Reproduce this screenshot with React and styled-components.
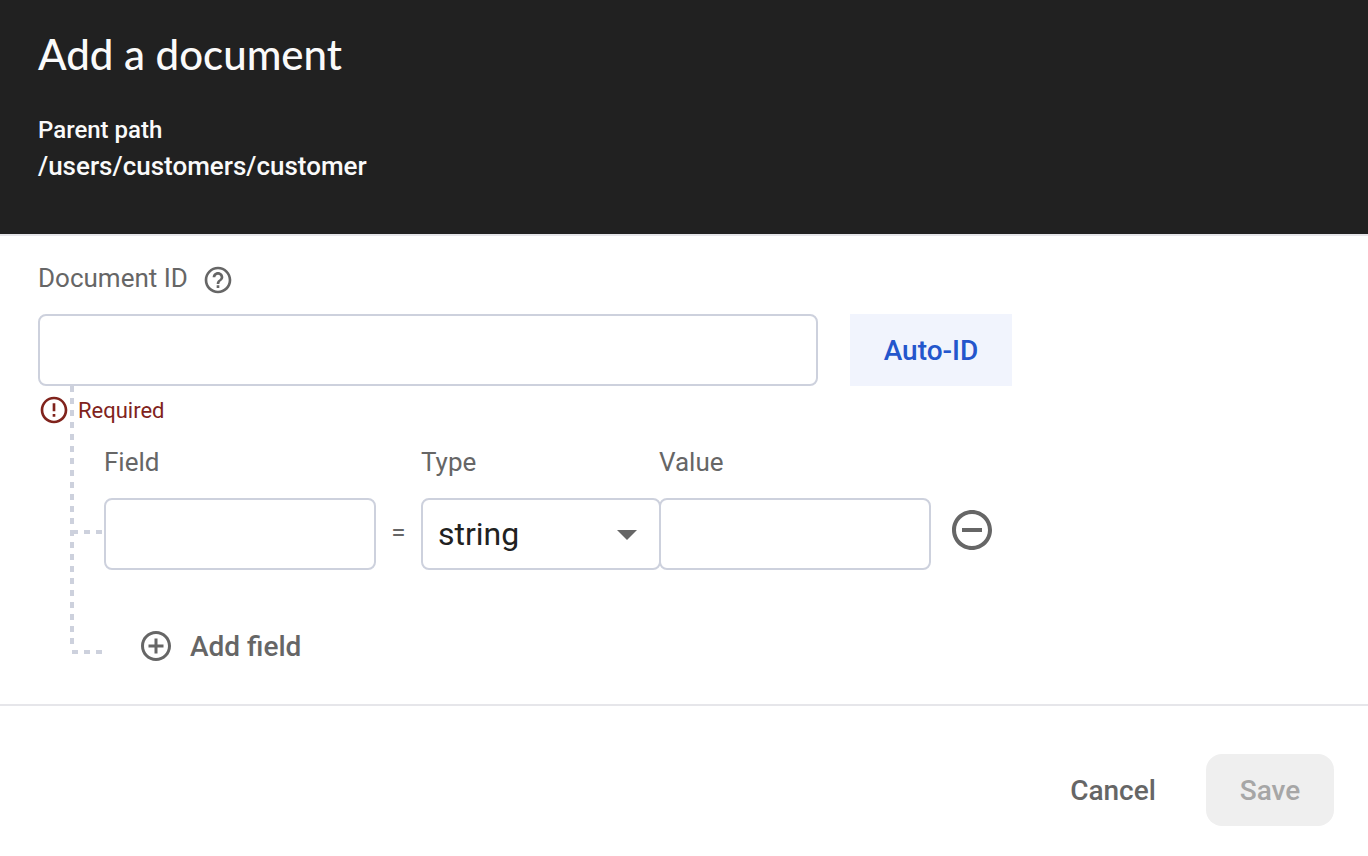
import React, { useState } from "react";
import styled, { createGlobalStyle } from "styled-components";
import {
  MdAddCircleOutline,
  MdErrorOutline,
  MdHelpOutline,
  MdRemoveCircleOutline,
} from "react-icons/md";

const color = {
  header: "#212121",
  text: "#212121",
  muted: "#666666",
  outline: "#cdd1dd",
  rule: "#e6e6ea",
  error: "#80231c",
  primary: "#2456cc",
  primaryTint: "#f1f4fd",
};

const dash = (direction) =>
  `repeating-linear-gradient(${direction}, ${color.outline} 0 6px, transparent 6px 12px)`;

const GlobalStyle = createGlobalStyle`
  *, *::before, *::after { box-sizing: border-box; }
  body {
    margin: 0;
    background: #fff;
    color: ${color.text};
    font-family: Roboto, "Liberation Sans", sans-serif;
  }
  button, input, select { font-family: inherit; }
`;

const Dialog = styled.form`
  display: flex;
  flex-direction: column;
`;

const Header = styled.header`
  background: ${color.header};
  border-bottom: 2px solid ${color.rule};
  color: #fafafa;
  padding: 30px 38px 50px;
`;

const Title = styled.h1`
  margin: 0 0 34px;
  font: 500 42px/48px Lato, sans-serif;
`;

const PathLine = styled.p`
  margin: 0;
  font-size: ${(p) => p.$size};
  font-weight: 500;
  line-height: 36px;
`;

const Body = styled.main`
  padding: 26px 38px 32px;
  border-bottom: 2px solid ${color.rule};
`;

const Label = styled.label`
  display: block;
  color: ${color.muted};
  font-size: 26px;
  line-height: 32px;
`;

const LabelRow = styled.div`
  display: flex;
  align-items: flex-start;
  gap: 14px;
  margin-bottom: 16px;
`;

const IconButton = styled.button`
  display: flex;
  align-items: center;
  justify-content: center;
  height: ${(p) => p.$height};
  padding: 0;
  border: 0;
  background: none;
  color: ${color.muted};
  cursor: pointer;
`;

const IdRow = styled.div`
  display: grid;
  grid-template-columns: minmax(0, 780px) auto;
  justify-content: start;
  gap: 32px;
`;

const TextInput = styled.input`
  display: block;
  width: 100%;
  height: 72px;
  padding: 0 16px;
  border: 2px solid ${color.outline};
  border-radius: 8px;
  background: #fff;
  color: ${color.text};
  font-size: 32px;
`;

const Button = styled.button`
  min-width: ${(p) => p.$minWidth};
  height: 72px;
  padding: 0 24px;
  border: 0;
  border-radius: ${(p) => (p.$rounded ? "16px" : "0")};
  background: ${(p) => p.$background || "none"};
  color: ${(p) => p.$color};
  font-size: 28px;
  font-weight: 500;
  cursor: pointer;

  &:disabled { cursor: default; }
`;

const Tree = styled.div`
  position: relative;
  padding-top: 8px;

  &::before {
    content: "";
    position: absolute;
    top: 0;
    bottom: 28px;
    left: 32px;
    width: 4px;
    background: ${dash("to bottom")};
  }
`;

const ErrorLine = styled.div`
  display: flex;
  align-items: center;
  gap: 8px;
  height: 32px;
  margin-bottom: 20px;
  color: ${color.error};
  font-size: 22px;
`;

const FieldGrid = styled.div`
  display: grid;
  grid-template-columns: 32px minmax(0, 272px) 45px minmax(0, 238px) minmax(0, 272px) auto;
  justify-content: start;
  row-gap: 20px;
  padding-left: 34px;

  > :not(label) { grid-row: 2; }
`;

const FieldLabel = styled(Label)`
  grid-row: 1;
  grid-column: ${(p) => p.$column};
`;

const Stub = styled.span`
  width: 30px;
  height: 4px;
  margin-top: 32px;
  background: ${dash("to right")};
`;

const Equals = styled.span`
  color: ${color.muted};
  font-size: 26px;
  line-height: 68px;
  text-align: center;
`;

const SelectBox = styled.div`
  position: relative;
  margin-right: -2px;

  svg {
    position: absolute;
    top: 32px;
    right: 24px;
    pointer-events: none;
  }
`;

const Select = styled(TextInput).attrs({ as: "select" })`
  appearance: none;
  padding: 0 48px 0 15px;
`;

const RemoveCell = styled.div`
  padding-left: 17px;
`;

const AddRow = styled.div`
  display: flex;
  align-items: flex-start;
  gap: 36px;
  height: 54px;
  margin-top: 48px;
  padding-left: 34px;
`;

const AddButton = styled(IconButton)`
  gap: 16px;
  font-size: 28px;
  font-weight: 500;
`;

const Footer = styled.footer`
  display: flex;
  justify-content: flex-end;
  gap: 16px;
  padding: 48px 34px 30px;
`;

export default function App() {
  const [type, setType] = useState("string");

  return (
    <>
      <GlobalStyle />
      <Dialog onSubmit={(e) => e.preventDefault()}>
        <Header>
          <Title>Add a document</Title>
          <PathLine $size="24px">Parent path</PathLine>
          <PathLine $size="26px">/users/customers/customer</PathLine>
        </Header>

        <Body>
          <LabelRow>
            <Label htmlFor="document-id">Document ID</Label>
            <IconButton type="button" aria-label="Help" $height="36px">
              <MdHelpOutline size={32} />
            </IconButton>
          </LabelRow>
          <IdRow>
            <TextInput id="document-id" type="text" aria-describedby="id-error" />
            <Button
              type="button"
              $minWidth="162px"
              $background={color.primaryTint}
              $color={color.primary}
            >
              Auto-ID
            </Button>
          </IdRow>

          <Tree>
            <ErrorLine id="id-error">
              <MdErrorOutline size={32} />
              Required
            </ErrorLine>
            <FieldGrid>
              <FieldLabel htmlFor="field-name" $column={2}>Field</FieldLabel>
              <FieldLabel htmlFor="field-type" $column={4}>Type</FieldLabel>
              <FieldLabel htmlFor="field-value" $column={5}>Value</FieldLabel>
              <Stub />
              <TextInput id="field-name" type="text" />
              <Equals>=</Equals>
              <SelectBox>
                <Select id="field-type" value={type} onChange={(e) => setType(e.target.value)}>
                  <option>string</option>
                  <option>number</option>
                  <option>boolean</option>
                  <option>map</option>
                  <option>array</option>
                </Select>
                <svg width="20" height="10" viewBox="0 0 20 10" aria-hidden="true">
                  <path d="M0 0h20L10 10z" fill={color.muted} />
                </svg>
              </SelectBox>
              <TextInput id="field-value" type="text" />
              <RemoveCell>
                <IconButton type="button" aria-label="Remove field" $height="64px">
                  <MdRemoveCircleOutline size={48} />
                </IconButton>
              </RemoveCell>
            </FieldGrid>
            <AddRow>
              <Stub />
              <AddButton type="button" $height="56px">
                <MdAddCircleOutline size={36} />
                Add field
              </AddButton>
            </AddRow>
          </Tree>
        </Body>

        <Footer>
          <Button type="button" $minWidth="154px" $color={color.muted}>
            Cancel
          </Button>
          <Button
            type="submit"
            disabled
            $rounded
            $minWidth="128px"
            $background="#efefef"
            $color="#a6a6a6"
          >
            Save
          </Button>
        </Footer>
      </Dialog>
    </>
  );
}
